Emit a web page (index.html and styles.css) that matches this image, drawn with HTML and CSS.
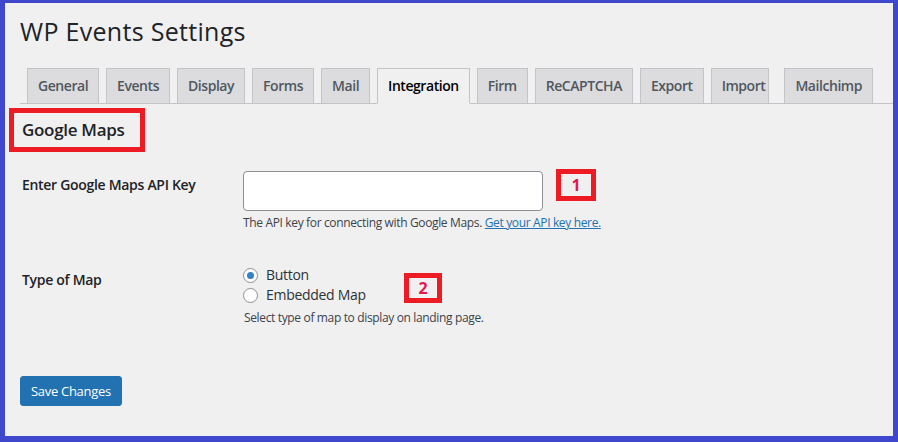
FILE: index.html
```html
<!DOCTYPE html>
<html lang="en">
<head>
<meta charset="utf-8">
<title>WP Events Settings</title>
<link rel="stylesheet" href="styles.css">
</head>
<body>
<div class="frame">
  <div class="wrap">
    <h1 class="page-title">WP Events Settings</h1>
    <nav class="tabs">
      <a class="tab">General</a>
      <a class="tab">Events</a>
      <a class="tab">Display</a>
      <a class="tab">Forms</a>
      <a class="tab">Mail</a>
      <a class="tab tab-active">Integration</a>
      <a class="tab">Firm</a>
      <a class="tab">ReCAPTCHA</a>
      <a class="tab">Export</a>
      <a class="tab tab-tight">Import</a>
      <a class="tab tab-wide-gap">Mailchimp</a>
    </nav>
    <h2 class="section-title">Google Maps</h2>
    <div class="form-row row-key">
      <div class="row-label">Enter Google Maps API Key</div>
      <div class="row-field">
        <input class="text-input" type="text">
        <p class="desc">The API key for connecting with Google Maps. <a class="link" href="#">Get your API key here.</a></p>
        <span class="callout callout-1">1</span>
      </div>
    </div>
    <div class="form-row row-type">
      <div class="row-label label-type">Type of Map</div>
      <div class="row-field">
        <label class="radio-line"><span class="radio radio-checked"></span><span>Button</span></label>
        <label class="radio-line"><span class="radio"></span><span>Embedded Map</span></label>
        <p class="desc desc-type">Select type of map to display on landing page.</p>
        <span class="callout callout-2">2</span>
      </div>
    </div>
    <button class="save-btn" type="button">Save Changes</button>
  </div>
</div>
</body>
</html>
```
FILE: styles.css
```css
*, *::before, *::after { box-sizing: border-box; }
html, body { margin: 0; padding: 0; }
body {
  font-family: "Open Sans", "Noto Sans", "Liberation Sans", sans-serif;
  color: #1d2327;
  background: #f0f0f0;
}
.frame {
  width: 898px;
  height: 442px;
  border-style: solid;
  border-color: #3f47cc;
  border-width: 3px 5px 6px 5px;
  background: #f0f0f0;
  overflow: hidden;
}
.wrap {
  padding-left: 15px;
}
.page-title {
  margin: 0;
  padding-top: 13px;
  font-size: 25px;
  line-height: 30px;
  font-weight: 500;
  letter-spacing: 0.3px;
  color: #1d2327;
}
.tabs {
  display: flex;
  gap: 7px;
  margin-top: 22px;
  padding-left: 7px;
  border-bottom: 1px solid #c3c4c7;
}
.tab {
  display: block;
  margin-bottom: -1px;
  padding: 5px 10px;
  border: 1px solid #c3c4c7;
  background: #dcdcde;
  color: #50575e;
  font-size: 14px;
  line-height: 24px;
  font-weight: 600;
  letter-spacing: -0.45px;
  white-space: nowrap;
}
.tab-active {
  background: #f0f0f0;
  border-bottom-color: #f0f0f0;
  color: #000;
}
.tab-tight { padding-right: 3px; }
.tab-wide-gap { margin-left: 8px; }
.section-title {
  position: relative;
  margin: 14px 0 0 2px;
  font-size: 17px;
  line-height: 24px;
  font-weight: 600;
  letter-spacing: -0.3px;
  color: #1d2327;
}
.section-title::after {
  content: "";
  position: absolute;
  left: -13px;
  top: -10px;
  width: 136px;
  height: 44px;
  border: 5px solid #ed1c24;
}
.form-row {
  display: grid;
  grid-template-columns: 223px 1fr;
}
.row-key { margin-top: 29px; }
.row-type { margin-top: 33px; }
.row-label {
  padding: 4px 0 0 2px;
  font-size: 14px;
  line-height: 20px;
  font-weight: 600;
  letter-spacing: -0.3px;
  color: #1d2327;
}
.label-type { padding-top: 5px; }
.row-field {
  position: relative;
}
.text-input {
  display: block;
  width: 300px;
  height: 40px;
  margin: 0;
  border: 1px solid #8c8f94;
  border-radius: 4px;
  background: #fff;
}
.desc {
  margin: 3px 0 0 0;
  font-size: 12px;
  line-height: 18px;
  letter-spacing: -0.35px;
  color: #3c434a;
}
.desc-type { margin-top: 4px; padding-left: 1px; }
.link { color: #2271b1; text-decoration: underline; }
.radio-line {
  display: flex;
  align-items: center;
  gap: 8px;
  height: 20px;
  font-size: 14px;
  line-height: 20px;
  letter-spacing: -0.3px;
  color: #2c3338;
}
.radio {
  position: relative;
  width: 15px;
  height: 15px;
  border: 1px solid #8c8f94;
  border-radius: 50%;
  background: #fff;
  flex: none;
}
.radio-checked::after {
  content: "";
  position: absolute;
  left: 3px;
  top: 3px;
  width: 7px;
  height: 7px;
  border-radius: 50%;
  background: #3582c4;
}
.callout {
  position: absolute;
  display: flex;
  align-items: center;
  justify-content: center;
  border: 5px solid #ed1c24;
  color: #e8174b;
  font-size: 16px;
  font-weight: 700;
  line-height: 1;
}
.callout-1 {
  left: 313px;
  top: -2px;
  width: 40px;
  height: 32px;
}
.callout-2 {
  left: 161px;
  top: 8px;
  width: 38px;
  height: 30px;
}
.save-btn {
  display: block;
  margin-top: 49px;
  height: 30px;
  padding: 0 10px;
  border: 1px solid #2271b1;
  border-radius: 3px;
  background: #2271b1;
  color: #fff;
  font-family: inherit;
  font-size: 13px;
  line-height: 28px;
  letter-spacing: -0.3px;
}
```
